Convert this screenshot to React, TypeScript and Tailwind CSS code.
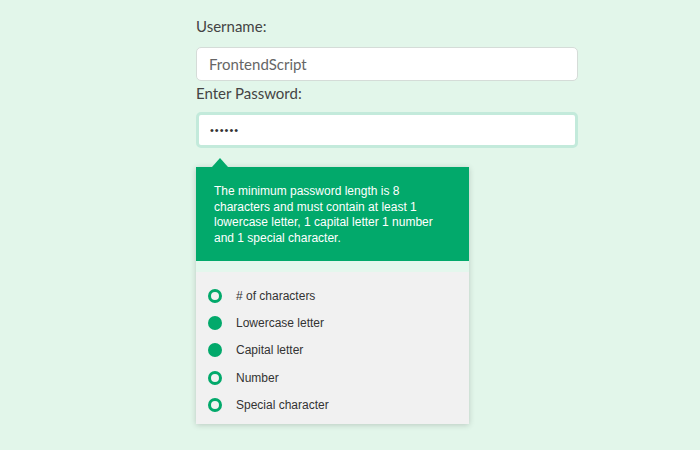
const rules = [
  { label: '# of characters', done: false },
  { label: 'Lowercase letter', done: true },
  { label: 'Capital letter', done: true },
  { label: 'Number', done: false },
  { label: 'Special character', done: false },
];

export default function App() {
  return (
    <div className="w-[700px] h-[450px] bg-[#e2f6ea] overflow-hidden">
      <div className="ml-[196px] w-[382px] pt-[16px]">
        <label className="block text-[15px] leading-[20px] text-[#444] font-['Lato',sans-serif] mb-[11px]">
          Username:
        </label>
        <input
          readOnly
          value="FrontendScript"
          className="block w-full h-[34px] px-[12px] bg-white rounded-[5px] border border-[#d5dcd8] text-[15px] text-[#666] font-['Lato',sans-serif] outline-none"
        />
        <label className="block mt-[2px] text-[15px] leading-[20px] text-[#444] font-['Lato',sans-serif] mb-[9px]">
          Enter Password:
        </label>
        <input
          readOnly
          type="password"
          value="secret"
          className="block w-full h-[36px] px-[11px] bg-white rounded-[5px] border-[3px] border-[#c3eadb] text-[11px] tracking-[1px] text-[#333] font-['Liberation_Sans',sans-serif] outline-none"
        />

        <div className="relative mt-[19px] w-[273px] shadow-[0_1px_6px_rgba(0,0,0,0.18)] font-['Liberation_Sans',Arial,sans-serif]">
          <div className="absolute -top-[9px] left-[16px] w-0 h-0 border-l-[8px] border-r-[8px] border-b-[9px] border-l-transparent border-r-transparent border-b-[#02a96b]" />
          <div className="bg-[#02a96b] text-white text-[12px] leading-[15.5px] px-[18px] pt-[17px] pb-[20px] h-[94px]">
            The minimum password length is 8 characters and must contain at least 1 lowercase letter, 1 capital letter 1 number and 1 special character.
          </div>
          <div className="h-[11px] bg-[#e4f7ed]" />
          <ul className="bg-[#f1f1f1] pt-[10px] pb-[6px]">
            {rules.map((r) => (
              <li key={r.label} className="flex items-center h-[27.3px] pl-[12px]">
                <span
                  className={
                    r.done
                      ? 'w-[14px] h-[14px] rounded-full bg-[#02a96b]'
                      : 'w-[14px] h-[14px] rounded-full border-[3px] border-[#02a96b]'
                  }
                />
                <span className="ml-[14px] text-[12px] text-[#333]">{r.label}</span>
              </li>
            ))}
          </ul>
        </div>
      </div>
    </div>
  );
}
